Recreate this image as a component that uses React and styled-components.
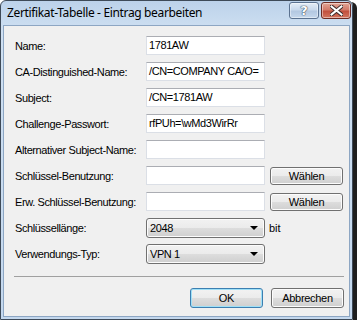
import React from "react";
import styled, { createGlobalStyle } from "styled-components";

const GlobalStyle = createGlobalStyle`
  html, body {
    margin: 0;
    padding: 0;
    background: #ffffff;
  }
`;

const fields = [
  { label: "Name:", value: "1781AW" },
  { label: "CA-Distinguished-Name:", value: "/CN=COMPANY CA/O=" },
  { label: "Subject:", value: "/CN=1781AW" },
  { label: "Challenge-Passwort:", value: "rfPUh=\\wMd3WirRr" },
  { label: "Alternativer Subject-Name:", value: "" },
  { label: "Schlüssel-Benutzung:", value: "", pick: true },
  { label: "Erw. Schlüssel-Benutzung:", value: "", pick: true },
];

function App() {
  return (
    <>
      <GlobalStyle />
      <Window>
        <TitleBar>
          <Title>Zertifikat-Tabelle - Eintrag bearbeiten</Title>
          <CaptionButtons>
            <CaptionButton>
              <HelpGlyph>?</HelpGlyph>
            </CaptionButton>
            <CaptionButton $close>
              <svg width="13" height="11" viewBox="0 0 13 11">
                <path
                  d="M1.5 1.5 L11.5 9.5 M11.5 1.5 L1.5 9.5"
                  stroke="#3b2a2a"
                  strokeWidth="4"
                  strokeLinecap="square"
                />
                <path
                  d="M1.5 1.5 L11.5 9.5 M11.5 1.5 L1.5 9.5"
                  stroke="#ffffff"
                  strokeWidth="2"
                  strokeLinecap="square"
                />
              </svg>
            </CaptionButton>
          </CaptionButtons>
        </TitleBar>

        <Client>
          <Form>
            {fields.map((f) => (
              <React.Fragment key={f.label}>
                <Label>{f.label}</Label>
                <TextBox>{f.value}</TextBox>
                {f.pick ? <PushButton>Wählen</PushButton> : <span />}
              </React.Fragment>
            ))}

            <Label>Schlüssellänge:</Label>
            <Combo>
              <span>2048</span>
              <Arrow />
            </Combo>
            <Unit>bit</Unit>

            <Label>Verwendungs-Typ:</Label>
            <Combo>
              <span>VPN 1</span>
              <Arrow />
            </Combo>
            <span />
          </Form>

          <Separator />

          <Footer>
            <PushButton $default $height={20}>
              OK
            </PushButton>
            <PushButton $height={20}>Abbrechen</PushButton>
          </Footer>
        </Client>
      </Window>
    </>
  );
}

export default App;

const Window = styled.div`
  box-sizing: border-box;
  width: 353px;
  height: 320px;
  display: flex;
  flex-direction: column;
  border: 1px solid #3e4a58;
  border-radius: 6px 6px 0 0;
  background: linear-gradient(#bcd2ea, #cfe0f2 30px, #c4d8ee);
  box-shadow: 4px 2px 0 #1e1e1e;
  font-family: "Liberation Sans", Arial, sans-serif;
  font-size: 11px;
  color: #000;
`;

const TitleBar = styled.div`
  height: 24px;
  display: flex;
  justify-content: space-between;
  align-items: flex-start;
  padding: 0 1px 0 6px;
`;

const Title = styled.div`
  font-family: "Noto Sans", "Open Sans", sans-serif;
  font-size: 12px;
  line-height: 24px;
  color: #000;
  letter-spacing: -0.35px;
`;

const CaptionButtons = styled.div`
  display: flex;
  gap: 2px;
  margin-top: 1px;
`;

const CaptionButton = styled.div`
  box-sizing: border-box;
  width: 30px;
  height: 17px;
  display: flex;
  align-items: center;
  justify-content: center;
  border: 1px solid ${(p) => (p.$close ? "#6d2a22" : "#5b7290")};
  border-radius: 3px;
  background: ${(p) =>
    p.$close
      ? "linear-gradient(#e2a596, #d27a69 45%, #c2503e 55%, #d2755f)"
      : "linear-gradient(#e4edf7, #c9d9ec 45%, #b3c8e1 55%, #c6d8ec)"};
  box-shadow: inset 0 0 0 1px rgba(255, 255, 255, 0.45);
`;

const HelpGlyph = styled.span`
  font-family: "DejaVu Sans", sans-serif;
  font-weight: bold;
  font-size: 13px;
  color: #fff;
  line-height: 1;
  text-shadow: 0 0 1px #3a4a5f, 0 0 1px #3a4a5f, 0 0 1px #3a4a5f;
`;

const Client = styled.div`
  flex: 1;
  margin: 0 2px 2px 2px;
  background: #f0f0f0;
  border: 1px solid #8da6c3;
  padding: 10px 5px 0 10px;
  display: flex;
  flex-direction: column;
`;

const Form = styled.div`
  display: grid;
  grid-template-columns: 127px 119px 73px;
  grid-auto-rows: 19px;
  column-gap: 5px;
  row-gap: 7px;
  align-items: center;
`;

const Label = styled.div`
  padding-left: 1px;
  letter-spacing: -0.4px;
  white-space: nowrap;
`;

const TextBox = styled.div`
  box-sizing: border-box;
  height: 19px;
  padding: 0 2px;
  line-height: 17px;
  background: #fff;
  border: 1px solid #dbdfe6;
  border-top-color: #abadb3;
  letter-spacing: -0.4px;
  white-space: nowrap;
  overflow: hidden;
`;

const PushButton = styled.div`
  box-sizing: border-box;
  width: 73px;
  height: ${(p) => p.$height || 18}px;
  display: flex;
  align-items: center;
  justify-content: center;
  border: 1px solid ${(p) => (p.$default ? "#3c7fb1" : "#707070")};
  border-radius: 3px;
  background: linear-gradient(#f2f2f2, #ebebeb 50%, #dddddd 50%, #cfcfcf);
  box-shadow: inset 0 0 0 1px ${(p) => (p.$default ? "#9fe0f7" : "#fcfcfc")};
  letter-spacing: -0.3px;
`;

const Combo = styled.div`
  box-sizing: border-box;
  height: 20px;
  display: flex;
  align-items: center;
  justify-content: space-between;
  padding: 0 6px 0 3px;
  border: 1px solid #707070;
  border-radius: 3px;
  background: linear-gradient(#f2f2f2, #ebebeb 50%, #dddddd 50%, #cfcfcf);
  box-shadow: inset 0 0 0 1px #fcfcfc;
  letter-spacing: -0.4px;
`;

const Arrow = styled.span`
  width: 0;
  height: 0;
  border-left: 4px solid transparent;
  border-right: 4px solid transparent;
  border-top: 4px solid #000;
`;

const Unit = styled.div`
  margin-left: -1px;
`;

const Separator = styled.div`
  margin-top: 13px;
  height: 0;
  border-top: 1px solid #a0a0a0;
`;

const Footer = styled.div`
  display: flex;
  justify-content: flex-end;
  gap: 8px;
  margin-top: 11px;
`;
